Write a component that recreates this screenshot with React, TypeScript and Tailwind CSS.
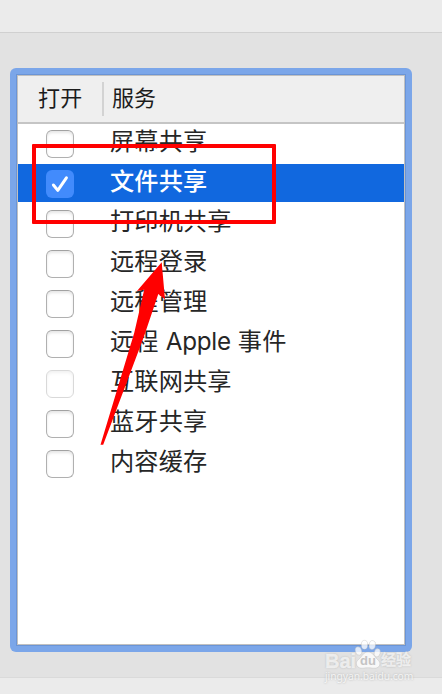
import React from 'react';

interface Service {
  name: React.ReactNode;
  checked?: boolean;
  disabled?: boolean;
}

const SERVICES: Service[] = [
  { name: '屏幕共享' },
  { name: '文件共享', checked: true },
  { name: '打印机共享' },
  { name: '远程登录' },
  { name: '远程管理' },
  { name: <>远程 <span className="tracking-[-0.2px]">Apple</span> 事件</> },
  { name: '互联网共享', disabled: true },
  { name: '蓝牙共享' },
  { name: '内容缓存' },
];

const Checkbox: React.FC<{ checked?: boolean; disabled?: boolean }> = ({ checked, disabled }) => {
  if (checked) {
    return (
      <div className="w-7 h-7 rounded-[6px] bg-[#428bfc] shrink-0">
        <svg viewBox="0 0 28 28" className="w-7 h-7" fill="none" stroke="#fff" strokeWidth="3" strokeLinecap="round" strokeLinejoin="round">
          <path d="M7.4 15 L11.8 20.4 L20.4 7.8" />
        </svg>
      </div>
    );
  }
  return (
    <div
      className={`w-7 h-7 rounded-[6px] border bg-white shrink-0 shadow-[inset_0_2px_3px_rgba(0,0,0,0.1)] ${
        disabled ? 'border-[#b5b5b5] opacity-50' : 'border-[#b0b0b0] border-t-[#a2a2a2]'
      }`}
    ></div>
  );
};

const ServiceRow: React.FC<{ service: Service }> = ({ service }) => (
  <div className={`h-[38px] mb-0.5 pl-7 flex items-start ${service.checked ? 'bg-[#1168df] text-white font-medium' : 'text-[#262626]'}`}>
    <div className="mt-1.5">
      <Checkbox checked={service.checked} disabled={service.disabled} />
    </div>
    <span className="ml-9 text-[24.2px] leading-9 tracking-[0.15px] whitespace-nowrap">{service.name}</span>
  </div>
);

const Watermark: React.FC = () => (
  <div className="absolute left-[324px] top-[639px] w-[92px] h-[46px] text-white/75 [text-shadow:0_0_2px_#aaa]">
    <svg viewBox="0 0 92 46" className="absolute inset-0 w-[92px] h-[46px]" fill="#fff" fillOpacity="0.75" stroke="#aaa" strokeOpacity="0.5" strokeWidth="0.6">
      <ellipse cx="34.5" cy="12" rx="3.2" ry="4.3" transform="rotate(-15 34.5 12)" />
      <ellipse cx="40.5" cy="5.8" rx="3.2" ry="4.5" />
      <ellipse cx="48.3" cy="6" rx="3.2" ry="4.5" transform="rotate(10 48.3 6)" />
      <ellipse cx="53.2" cy="13.8" rx="3" ry="4.2" transform="rotate(15 53.2 13.8)" />
      <path d="M44 13 C39 13 38 18 34.5 20.5 C30 24 33 30 39 29.2 C42 28.6 46 28.6 49 29.2 C56 30 58 24 53.5 20.5 C50 17.5 49 13 44 13 Z" />
    </svg>
    <span className="absolute left-px top-[14px] text-[20px] leading-4 font-bold [-webkit-text-stroke:0.4px_#eee] font-['Liberation_Sans']">Bai</span>
    <span className="absolute left-[36px] top-[16px] text-[13px] leading-3 font-bold text-[#c4c4c4] font-['Liberation_Sans'] [text-shadow:none]">du</span>
    <span className="absolute left-[57px] top-[13px] text-[15px] leading-4 font-bold whitespace-nowrap [-webkit-text-stroke:0.3px_#eee]">经验</span>
    <span className="absolute left-px top-[32px] text-[10.3px] leading-[10px] tracking-[-0.05px] text-white/80 whitespace-nowrap font-['Noto_Sans']">jingyan.baidu.com</span>
  </div>
);

const App: React.FC = () => {
  return (
    <div className="relative w-[442px] h-[694px] overflow-hidden bg-[#e2e2e2] flex flex-col font-[Inter,'Noto_Sans_CJK_SC',sans-serif]">
      <div className="h-[33px] shrink-0 bg-[#ebebeb] border-b border-[#d0d0d0]"></div>

      {/* focus ring around the list */}
      <div className="mt-[35px] ml-[10px] w-[402px] h-[584px] shrink-0 rounded-[6px] bg-[#7ba6e9] p-1.5">
        <div className="h-full border border-[#6a94d6]">
          <div className="h-full border border-[#c0c0c0] bg-white">
            <div className="h-12 flex items-center bg-[#efefef] border-b-2 border-[#c5c5c5] text-[22px] text-[#1c1c1c]">
              <span className="w-[84px] pl-5 pb-0.5 leading-8 tracking-[0.3px] whitespace-nowrap">打开</span>
              <div className="w-0.5 h-[34px] bg-[#d3d3d3]"></div>
              <span className="pl-2 pb-0.5 leading-8">服务</span>
            </div>
            {SERVICES.map((service, idx) => (
              <ServiceRow key={idx} service={service} />
            ))}
          </div>
        </div>
      </div>

      <div className="mt-[25px] h-[17px] shrink-0 bg-[#ebebeb] border-t border-[#dadada]"></div>

      {/* annotations */}
      <div className="absolute left-8 top-36 w-[244px] h-20 border-4 border-[#ff0000] rounded-[1px]"></div>
      <svg viewBox="0 0 70 190" className="absolute left-[98px] top-[260px] w-[70px] h-[190px]" fill="#ff0000">
        <path d="M63.7 2.2 L67 39.5 L60.3 34 L45.8 77 L5.2 184.8 L2.5 184.8 L36.2 73 L46.2 29.8 L39 31 Z" />
      </svg>

      <Watermark />
    </div>
  );
};

export default App;
